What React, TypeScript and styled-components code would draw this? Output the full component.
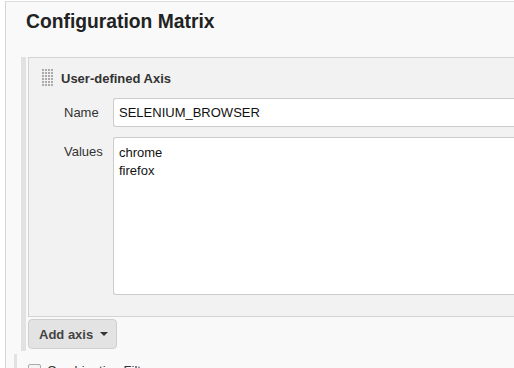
import React from "react";
import styled, { createGlobalStyle } from "styled-components";

const Global = createGlobalStyle`
  html, body { margin: 0; padding: 0; background: #ffffff; overflow: hidden; }
  body { font-family: "Liberation Sans", Arial, Helvetica, sans-serif; font-size: 13px; color: #333; }
  * { box-sizing: border-box; }
`;

const Page = styled.div`
  margin: 1px 0 0 5px;
  width: 700px;
  height: 400px;
  background: #f9f9f9;
  border-top: 1px solid #dcdcdc;
  border-left: 1px solid #d6d6d6;
`;

const Title = styled.h2`
  margin: 0;
  padding: 9px 0 0 20px;
  font-size: 19.3px;
  line-height: 22px;
  font-weight: bold;
  color: #222;
`;

const Section = styled.div`
  margin: 24px 0 0 15px;
  padding: 0 0 2px 2px;
  border-left: 5px solid #e2e2e2;
`;

const Panel = styled.div`
  background: #f2f2f2;
  border: 1px solid #d3d3d3;
  border-right: none;
  padding-bottom: 21px;
`;

const Header = styled.div`
  display: flex;
  align-items: center;
  height: 40px;
  padding-left: 13px;
  gap: 7px;
  font-weight: bold;
  font-size: 13px;
  color: #333;
`;

const Handle = styled.div`
  width: 12px;
  height: 18px;
  background-image: radial-gradient(circle at 1px 1px, #aaa 0.9px, transparent 1.1px);
  background-size: 3px 3px;
`;

const Form = styled.div`
  display: grid;
  grid-template-columns: 84px 1fr;
  row-gap: 10px;
`;

const Label = styled.div`
  padding-left: 35px;
  line-height: 29px;
  align-self: start;
  color: #333;
`;

const TextInput = styled.div`
  height: 29px;
  line-height: 27px;
  padding: 0 5px;
  background: #fff;
  border: 1px solid #ccc;
  border-right: none;
  border-radius: 3px 0 0 3px;
  color: #111;
`;

const TextArea = styled.div`
  height: 158px;
  padding: 6px 5px;
  line-height: 18px;
  background: #fff;
  border: 1px solid #ccc;
  border-right: none;
  border-radius: 3px 0 0 3px;
  color: #111;
`;

const Button = styled.button`
  display: inline-flex;
  align-items: center;
  gap: 7px;
  margin-top: 2px;
  height: 30px;
  padding: 0 8px 0 10px;
  font-family: inherit;
  font-size: 13px;
  font-weight: bold;
  color: #444;
  background: #e3e3e3;
  border: 1px solid #cfcfcf;
  border-radius: 4px;
`;

const Caret = styled.span`
  width: 0;
  height: 0;
  border-left: 4px solid transparent;
  border-right: 4px solid transparent;
  border-top: 4px solid #333;
`;

const NextRow = styled.div`
  margin: 3px 0 0 8px;
  padding: 9px 0 0 11px;
  border-left: 3px solid #e2e2e2;
  display: flex;
  align-items: center;
  gap: 6px;
`;

const Check = styled.span`
  width: 13px;
  height: 13px;
  border: 1px solid #aaa;
  border-radius: 2px;
  background: #f4f4f4;
`;

export default function App() {
  return (
    <>
      <Global />
      <Page>
        <Title>Configuration Matrix</Title>
        <Section>
          <Panel>
            <Header>
              <Handle />
              <span>User-defined Axis</span>
            </Header>
            <Form>
              <Label>Name</Label>
              <TextInput>SELENIUM_BROWSER</TextInput>
              <Label>Values</Label>
              <TextArea>
                chrome
                <br />
                firefox
              </TextArea>
            </Form>
          </Panel>
          <Button>
            Add axis <Caret />
          </Button>
        </Section>
        <NextRow>
          <Check />
          <span>Combination Filter</span>
        </NextRow>
      </Page>
    </>
  );
}
